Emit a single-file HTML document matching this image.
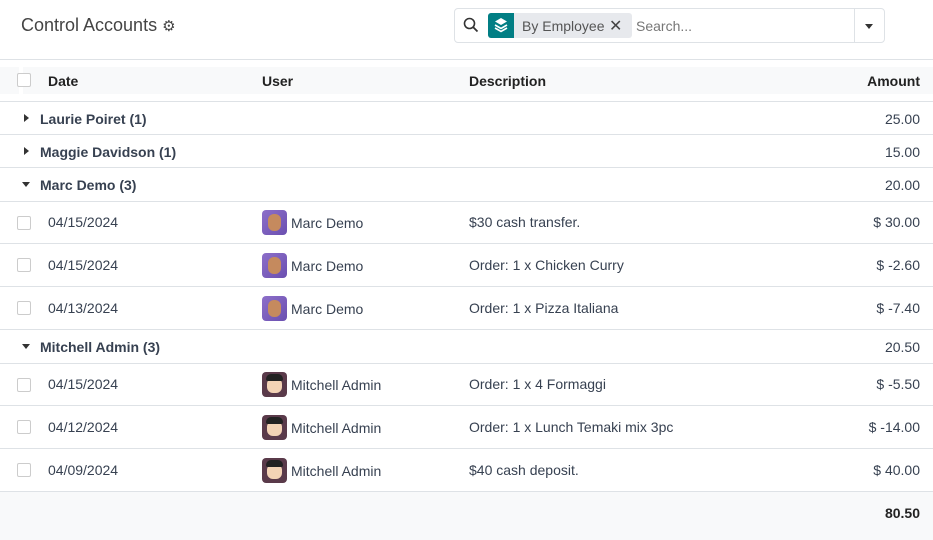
<!DOCTYPE html>
<html><head><style>
*{box-sizing:border-box;margin:0;padding:0}
body{width:933px;height:540px;overflow:hidden;background:#fff;font-family:"Liberation Sans",sans-serif;color:#374151;font-size:14px;position:relative}
.abs{position:absolute}
.row{position:absolute;left:0;width:933px;border-bottom:1px solid #dee2e6}
.t{position:absolute;white-space:nowrap}
.cb{position:absolute;left:17px;width:14px;height:14px;border:1px solid #ccc;border-radius:2px;background:#fff}
.av{position:absolute;left:262px;width:25px;height:25px;border-radius:4px}
.m{background:linear-gradient(135deg,#8d6fc9,#6a4fb0)}
.a{background:#5a3a4a}
.av i{position:absolute;left:6px;top:4px;width:13px;height:17px;border-radius:6px;background:#c58a5e}
.a i{background:#f3d3b5;top:6px;left:5px;width:15px;height:15px}
.a b{position:absolute;left:4px;top:2px;width:17px;height:7px;background:#222;border-radius:5px 5px 2px 2px}
.tri{position:absolute;width:0;height:0}
</style></head><body>
<div class="t" style="left:21px;top:15px;font-size:18px;color:#444">Control Accounts <span style="font-size:15px">⚙</span></div>
<div class="abs" style="left:454px;top:8px;width:431px;height:35px;border:1px solid #dee2e6;border-radius:4px"></div>
<div class="abs" style="left:854px;top:9px;width:1px;height:33px;background:#dee2e6"></div>
<svg class="abs" style="left:463px;top:17px" width="16" height="16" viewBox="0 0 16 16"><circle cx="6.5" cy="6.5" r="5" fill="none" stroke="#333" stroke-width="1.6"/><path d="M10 10l4.5 4.5" stroke="#333" stroke-width="1.8"/></svg>
<div class="abs" style="left:488px;top:13px;width:144px;height:25px;background:#e7e9ed;border-radius:3px"></div>
<div class="abs" style="left:488px;top:13px;width:26px;height:25px;background:#017e84;border-radius:3px 0 0 3px"></div>
<svg class="abs" style="left:493px;top:17px" width="16" height="16" viewBox="0 0 16 16"><path d="M8 1L14 4.5 8 8 2 4.5z" fill="#fff"/><path d="M2 8l6 3.5L14 8M2 11l6 3.5 6-3.5" fill="none" stroke="#fff" stroke-width="1.6"/></svg>
<div class="t" style="left:522px;top:18px;font-size:14px;color:#555">By Employee</div>
<div class="t" style="left:609px;top:16px;font-size:16px;color:#444">✕</div>
<div class="t" style="left:636px;top:18px;color:#777">Search...</div>
<div class="tri" style="left:865px;top:24px;border-left:4px solid transparent;border-right:4px solid transparent;border-top:5px solid #333"></div>
<div class="abs" style="left:0;top:59px;width:933px;height:1px;background:#dee2e6"></div>
<div class="abs" style="left:0;top:67px;width:933px;height:27px;background:#f8f9fa"></div>
<div class="abs" style="left:19px;top:67px;width:4px;height:27px;background:#fff"></div>
<div class="cb" style="top:73px"></div>
<div class="t" style="left:48px;top:73px;font-weight:bold;color:#222">Date</div>
<div class="t" style="left:262px;top:73px;font-weight:bold;color:#222">User</div>
<div class="t" style="left:469px;top:73px;font-weight:bold;color:#222">Description</div>
<div class="t" style="right:13px;top:73px;font-weight:bold;color:#222">Amount</div>
<div class="abs" style="left:0;top:101px;width:933px;height:1px;background:#dee2e6"></div>

<div class="row" style="top:102px;height:33px"><div class="tri" style="left:24px;top:12px;border-top:4px solid transparent;border-bottom:4px solid transparent;border-left:5px solid #333"></div><div class="t" style="left:40px;top:9px;font-weight:bold">Laurie Poiret (1)</div><div class="t" style="right:13px;top:9px">25.00</div></div>
<div class="row" style="top:135px;height:33px"><div class="tri" style="left:24px;top:12px;border-top:4px solid transparent;border-bottom:4px solid transparent;border-left:5px solid #333"></div><div class="t" style="left:40px;top:9px;font-weight:bold">Maggie Davidson (1)</div><div class="t" style="right:13px;top:9px">15.00</div></div>
<div class="row" style="top:168px;height:34px"><div class="tri" style="left:22px;top:14px;border-left:4px solid transparent;border-right:4px solid transparent;border-top:5px solid #333"></div><div class="t" style="left:40px;top:9px;font-weight:bold">Marc Demo (3)</div><div class="t" style="right:13px;top:9px">20.00</div></div>

<div class="row" style="top:202px;height:42px"><div class="cb" style="top:14px"></div><div class="t" style="left:48px;top:12px">04/15/2024</div><div class="av m" style="top:8px"><i></i></div><div class="t" style="left:291px;top:13px">Marc Demo</div><div class="t" style="left:469px;top:12px">$30 cash transfer.</div><div class="t" style="right:13px;top:12px">$ 30.00</div></div>
<div class="row" style="top:244px;height:43px"><div class="cb" style="top:14px"></div><div class="t" style="left:48px;top:13px">04/15/2024</div><div class="av m" style="top:9px"><i></i></div><div class="t" style="left:291px;top:14px">Marc Demo</div><div class="t" style="left:469px;top:13px">Order: 1 x Chicken Curry</div><div class="t" style="right:13px;top:13px">$ -2.60</div></div>
<div class="row" style="top:287px;height:43px"><div class="cb" style="top:14px"></div><div class="t" style="left:48px;top:13px">04/13/2024</div><div class="av m" style="top:9px"><i></i></div><div class="t" style="left:291px;top:14px">Marc Demo</div><div class="t" style="left:469px;top:13px">Order: 1 x Pizza Italiana</div><div class="t" style="right:13px;top:13px">$ -7.40</div></div>

<div class="row" style="top:330px;height:34px"><div class="tri" style="left:22px;top:14px;border-left:4px solid transparent;border-right:4px solid transparent;border-top:5px solid #333"></div><div class="t" style="left:40px;top:9px;font-weight:bold">Mitchell Admin (3)</div><div class="t" style="right:13px;top:9px">20.50</div></div>

<div class="row" style="top:364px;height:42px"><div class="cb" style="top:14px"></div><div class="t" style="left:48px;top:12px">04/15/2024</div><div class="av a" style="top:8px"><i></i><b></b></div><div class="t" style="left:291px;top:13px">Mitchell Admin</div><div class="t" style="left:469px;top:12px">Order: 1 x 4 Formaggi</div><div class="t" style="right:13px;top:12px">$ -5.50</div></div>
<div class="row" style="top:406px;height:43px"><div class="cb" style="top:14px"></div><div class="t" style="left:48px;top:13px">04/12/2024</div><div class="av a" style="top:9px"><i></i><b></b></div><div class="t" style="left:291px;top:14px">Mitchell Admin</div><div class="t" style="left:469px;top:13px">Order: 1 x Lunch Temaki mix 3pc</div><div class="t" style="right:13px;top:13px">$ -14.00</div></div>
<div class="row" style="top:449px;height:43px"><div class="cb" style="top:14px"></div><div class="t" style="left:48px;top:13px">04/09/2024</div><div class="av a" style="top:9px"><i></i><b></b></div><div class="t" style="left:291px;top:14px">Mitchell Admin</div><div class="t" style="left:469px;top:13px">$40 cash deposit.</div><div class="t" style="right:13px;top:13px">$ 40.00</div></div>

<div class="abs" style="left:0;top:492px;width:933px;height:48px;background:#f8f9fa"></div>
<div class="t" style="right:13px;top:505px;font-weight:bold;color:#222">80.50</div>
</body></html>
